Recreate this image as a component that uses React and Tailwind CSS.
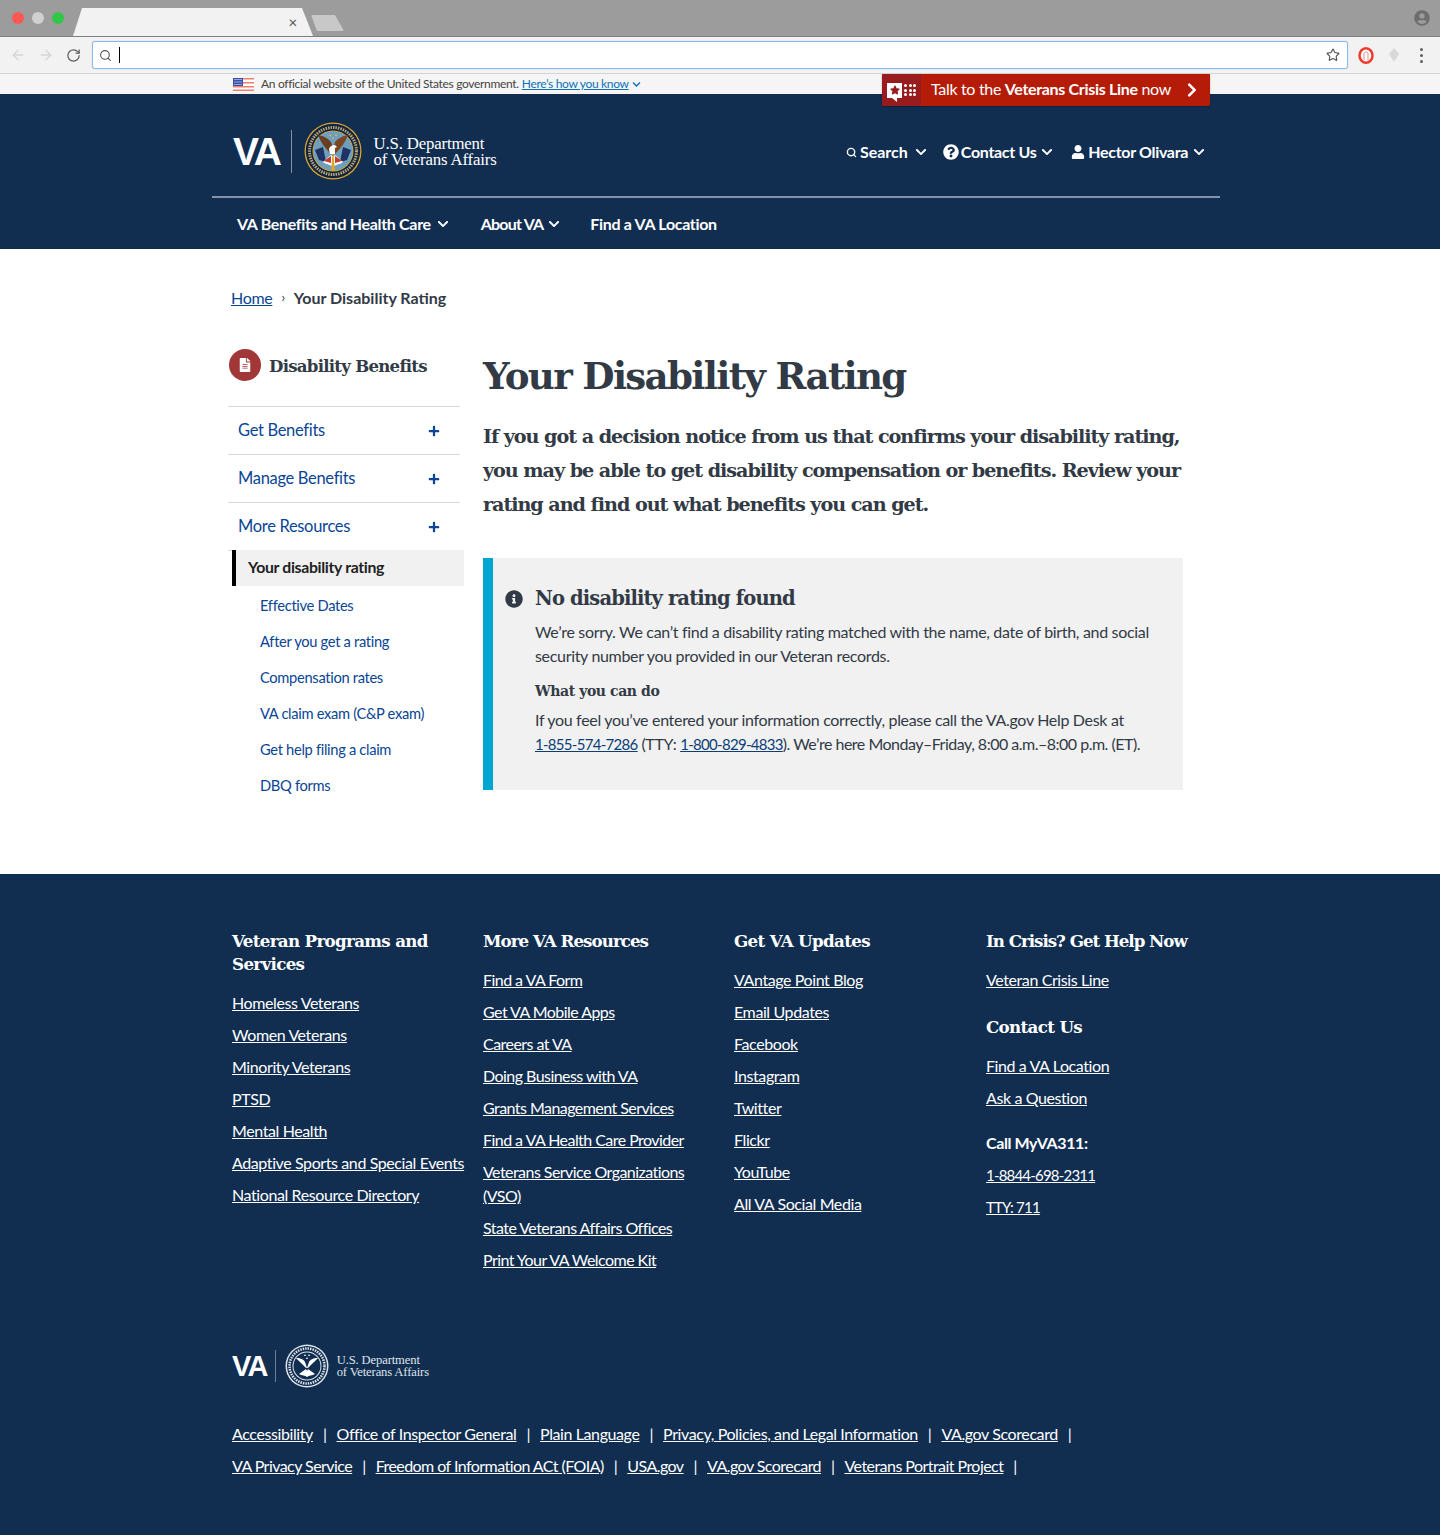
import { ArrowLeft, ArrowRight, RotateCw, Search, Star } from "lucide-react";
import {
  FaChevronDown,
  FaChevronRight,
  FaFileAlt,
  FaInfoCircle,
  FaPlus,
  FaQuestionCircle,
  FaStar,
  FaUser,
  FaUserCircle,
} from "react-icons/fa";

const sans = "font-['Lato','Noto_Sans',sans-serif]";
const slab = "font-['DejaVu_Serif',serif] font-bold";

const sideLinks = [
  "Effective Dates",
  "After you get a rating",
  "Compensation rates",
  "VA claim exam (C&P exam)",
  "Get help filing a claim",
  "DBQ forms",
];

const programs = [
  "Homeless Veterans",
  "Women Veterans",
  "Minority Veterans",
  "PTSD",
  "Mental Health",
  "Adaptive Sports and Special Events",
  "National Resource Directory",
];

const resources = [
  "Find a VA Form",
  "Get VA Mobile Apps",
  "Careers at VA",
  "Doing Business with VA",
  "Grants Management Services",
  "Find a VA Health Care Provider",
  "Veterans Service Organizations (VSO)",
  "State Veterans Affairs Offices",
  "Print Your VA Welcome Kit",
];

const updates = [
  "VAntage Point Blog",
  "Email Updates",
  "Facebook",
  "Instagram",
  "Twitter",
  "Flickr",
  "YouTube",
  "All VA Social Media",
];

const bottomOne = [
  "Accessibility",
  "Office of Inspector General",
  "Plain Language",
  "Privacy, Policies, and Legal Information",
  "VA.gov Scorecard",
];

const bottomTwo = [
  "VA Privacy Service",
  "Freedom of Information ACt (FOIA)",
  "USA.gov",
  "VA.gov Scorecard",
  "Veterans Portrait Project",
];

function Flag() {
  return (
    <svg width="21" height="13" viewBox="0 0 21 13">
      <rect width="21" height="13" fill="#fff" />
      {[0, 4, 8, 11.5].map((y) => (
        <rect key={y} y={y} width="21" height="1.500" fill="#ef7f6e" />
      ))}
      <rect width="10" height="8" fill="#3d4ea8" />
      <path d="M1.500 1.500h7M1.500 4h7M1.500 6.500h7" stroke="#fff" strokeDasharray="1 1" />
    </svg>
  );
}

function ColorSeal() {
  return (
    <svg width="58" height="58" viewBox="0 0 58 58">
      <circle cx="29" cy="29" r="28.500" fill="#d9a62e" />
      <circle cx="29" cy="29" r="27.200" fill="#12233f" />
      <circle cx="29" cy="29" r="23.500" fill="none" stroke="#b9a878" strokeWidth="3" strokeDasharray="1.500 1" />
      <circle cx="29" cy="29" r="20.500" fill="#d9a62e" />
      <circle cx="29" cy="29" r="19.700" fill="#6f9fbd" />
      <path d="M11 28l8-3 3 15-7-2z" fill="#1f3263" />
      <path d="M47 28l-8-3-3 15 7-2z" fill="#1f3263" />
      <path d="M27 32C22 27 17 21 14 13c6 1 9 3 13 7 1 3 2 8 2 12z" fill="#6b3d1f" />
      <path d="M31 32c5-5 10-11 13-19-6 1-9 3-13 7-1 3-2 8-2 12z" fill="#7a4722" />
      <path d="M25 27c1-3 3-4 6-4l2 2-2 1v6h-5z" fill="#fff" />
      <path d="M19 40l8-7 2 2 2-2 8 7c-4 3-7 2-10 5-3-3-6-2-10-5z" fill="#fff" />
      <path d="M20 39l7-5v7zM38 39l-7-5v7z" fill="#c8382f" />
      <path d="M28.500 32l-1.500 17h4l-1.500-17z" fill="#d9a62e" />
      <path d="M26 12l1 2h-2zM32 12l1 2h-2zM29 15l1 2h-2z" fill="#e2c14e" />
    </svg>
  );
}

function WhiteSeal() {
  return (
    <svg width="44" height="44" viewBox="0 0 44 44">
      <circle cx="22" cy="22" r="21.500" fill="#dfe4ea" />
      <circle cx="22" cy="22" r="20" fill="#112e51" />
      <circle cx="22" cy="22" r="17.500" fill="none" stroke="#dfe4ea" strokeWidth="2.500" strokeDasharray="1.500 1" />
      <circle cx="22" cy="22" r="14.500" fill="#dfe4ea" />
      <circle cx="22" cy="22" r="13.500" fill="#112e51" />
      <path d="M21 24C18 21 14 17 11 14c5 0 8 2 9 4l2 6zM23 24c3-3 7-7 10-10-5 0-8 2-9 4l-2 6z" fill="#fff" />
      <path d="M14 30l7-5 1 2 1-2 7 5c-3 2-6 1-8 3-2-2-5-1-8-3z" fill="#fff" />
      <path d="M20 10l1 2h-2zM24 10l1 2h-2zM22 13l1 2h-2z" fill="#fff" />
    </svg>
  );
}

function BrowserChrome() {
  return (
    <div className="bg-[#f2f2f2]">
      <div className="flex h-[37px] items-end border-b border-[#7f7f7f] bg-[#9c9c9c] pl-3">
        <div className="flex h-[36px] items-center gap-2 self-start">
          <span className="h-3 w-3 rounded-full bg-[#fc5753]" />
          <span className="h-3 w-3 rounded-full bg-[#d0d0d0]" />
          <span className="h-3 w-3 rounded-full bg-[#33c748]" />
        </div>
        <div className="ml-[9px] flex h-[28px] w-[240px] items-center justify-end bg-[#f2f2f2] pr-[16px] text-[15px] leading-none text-[#555] [clip-path:polygon(9px_0,229px_0,240px_100%,0_100%)]">
          ×
        </div>
        <div className="mb-[5px] ml-[-2px] h-[16px] w-[33px] rounded-[2px] bg-[#c8c8c8] [clip-path:polygon(0_0,24px_0,33px_100%,6px_100%)]" />
        <FaUserCircle className="mb-[10px] ml-auto mr-[10px] text-[16px] text-[#6e6e6e]" />
      </div>
      <div className="flex h-[37px] items-center border-b border-[#d4d4d4] pl-[10px] pr-[14px]">
        <ArrowLeft size={16} className="text-[#d5d5d5]" />
        <ArrowRight size={16} className="ml-3 text-[#d5d5d5]" />
        <RotateCw size={15} className="ml-3 text-[#5f5f5f]" />
        <div className="ml-[11px] flex h-[28px] w-[1256px] items-center rounded-[3px] border border-[#8cb9ec] bg-white pl-[6px] pr-[7px] shadow-[0_0_1px_#8cb9ec]">
          <Search size={13} className="text-[#555]" />
          <span className="ml-[7px] h-[16px] w-px bg-black" />
          <Star size={14} className="ml-auto text-[#555]" />
        </div>
        <svg width="16" height="17" viewBox="0 0 16 17" className="ml-[10px]">
          <ellipse cx="8" cy="8.500" rx="6.500" ry="7.200" fill="#fff" stroke="#ef3b2d" strokeWidth="2.500" />
          <path d="M6 13V6.500c0-2 4-2 4 0V13" fill="none" stroke="#f08a7e" strokeWidth="1" />
        </svg>
        <svg width="12" height="14" viewBox="0 0 12 14" className="ml-[14px]">
          <path d="M6 0l5 6-5 8-5-8z" fill="#d8d8d8" />
        </svg>
        <div className="ml-[20px] flex flex-col gap-[3px]">
          <span className="h-[3px] w-[3px] rounded-full bg-[#5f5f5f]" />
          <span className="h-[3px] w-[3px] rounded-full bg-[#5f5f5f]" />
          <span className="h-[3px] w-[3px] rounded-full bg-[#5f5f5f]" />
        </div>
      </div>
    </div>
  );
}

function CrisisButton() {
  return (
    <div className="absolute left-[670px] top-0 z-10 flex h-[32px] w-[328px] items-stretch rounded-b-[2px] bg-[#b51c08] text-white shadow-[0_1px_2px_rgba(0,0,0,0.3)]">
      <div className="flex w-[39px] items-center justify-center gap-[2px] rounded-bl-[2px] bg-[#981b1e]">
        <span className="relative flex h-[15px] w-[15px] items-center justify-center bg-white">
          <FaStar className="text-[10px] text-[#981b1e]" />
          <span className="absolute -bottom-[4px] left-[5px] h-0 w-0 border-l-[5px] border-t-[4px] border-l-transparent border-t-white" />
        </span>
        <span className="grid grid-cols-3 gap-[1.500px]">
          {[...Array(9).keys()].map((i) => (
            <span key={i} className="h-[3px] w-[3px] rounded-full bg-white" />
          ))}
        </span>
      </div>
      <div className="flex flex-1 items-center pb-[2px] pl-[10px] pr-[10px] text-[16px]">
        <span>
          Talk to the <b className="font-bold">Veterans Crisis Line</b> now
        </span>
        <FaChevronRight className="ml-auto mt-[2px] text-[16px]" />
      </div>
    </div>
  );
}

function Header() {
  return (
    <header className="bg-[#112e51] text-white">
      <div className="ml-[212px] w-[1008px]">
        <div className="flex h-[104px] items-center border-b-2 border-[#8592a6] pl-[21px] pr-[15px] pt-[14px]">
          <span className="-mt-[2px] flex items-center">
            <span className="font-['Liberation_Sans',sans-serif] text-[39px] font-bold leading-none tracking-[-0.06em]">VA</span>
            <span className="ml-[11px] h-[43px] w-px bg-[#8592a6]" />
            <span className="ml-[12px] flex"><ColorSeal /></span>
            <span className="ml-[12px] mt-[2px] font-['Liberation_Serif',serif] text-[16.800px] leading-[16px] tracking-[-0.01em]">
              U.S. Department
              <br />
              of Veterans Affairs
            </span>
          </span>
          <nav className="ml-auto flex items-center text-[16px] font-bold">
            <Search size={11} strokeWidth={3} className="mr-[3px]" />
            <span className="tracking-normal">Search</span>
            <FaChevronDown className="ml-[7px] text-[12px]" />
            <FaQuestionCircle className="ml-[16px] mr-[2px] text-[16px]" />
            <span>Contact Us</span>
            <FaChevronDown className="ml-[5px] text-[12px]" />
            <FaUser className="ml-[18px] mr-[3px] text-[14px]" />
            <span>Hector Olivara</span>
            <FaChevronDown className="ml-[5px] text-[12px]" />
          </nav>
        </div>
        <nav className="flex h-[51px] items-center pl-[25px] text-[16px] font-bold">
          <span>VA Benefits and Health Care</span>
          <FaChevronDown className="ml-[6px] text-[12px]" />
          <span className="ml-[32px] tracking-[-0.8px]">About VA</span>
          <FaChevronDown className="ml-[5px] text-[12px]" />
          <span className="ml-[30px]">Find a VA Location</span>
        </nav>
      </div>
    </header>
  );
}

function Sidebar() {
  return (
    <aside className="w-[236px]">
      <div className="flex h-[58px] w-[232px] items-start gap-2 border-b border-[#d6d7d9] pl-px">
        <span className="flex h-[32px] w-[32px] items-center justify-center rounded-full bg-[#a23737] text-white">
          <FaFileAlt className="text-[14px]" />
        </span>
        <span className={`${slab} mt-[5px] text-[16.600px] leading-[24px] tracking-[-0.045em] text-[#323a45]`}>Disability Benefits</span>
      </div>
      {["Get Benefits", "Manage Benefits", "More Resources"].map((t) => (
        <div key={t} className="flex h-[48px] w-[232px] items-center justify-between border-b border-[#d6d7d9] pl-[10px] pr-[20px] text-[16.500px] text-[#0a4595]">
          {t}
          <FaPlus className="text-[12px]" />
        </div>
      ))}
      <div className="-mt-px ml-1 flex h-[36px] w-[232px] items-center border-l-4 border-black bg-[#f1f1f1] pb-[2px] pl-3 text-[15.800px] font-bold text-[#212121]">
        Your disability rating
      </div>
      <div className="mt-px">
        {sideLinks.map((t) => (
          <div key={t} className="flex h-[36px] items-center pl-[32px] text-[14.700px] text-[#0a4595]">
            {t}
          </div>
        ))}
      </div>
    </aside>
  );
}

function Alert() {
  return (
    <div className="mt-[36px] h-[232px] border-l-[10px] border-[#00a6d2] bg-[#f1f1f1] pl-[12px] pt-[27px] text-[16px] leading-[24px] text-[#323a45]">
      <div className="flex items-center">
        <FaInfoCircle className="text-[18px]" />
        <h2 className={`${slab} ml-[12px] text-[19.500px] leading-[28px] tracking-[-0.045em]`}>No disability rating found</h2>
      </div>
      <div className="ml-[30px]">
        <p className="mt-[7px]">
          We’re sorry. We can’t find a disability rating matched with the name, date of birth, and social
          <br />
          security number you provided in our Veteran records.
        </p>
        <p className={`${slab} mt-[11px] text-[14px] tracking-[-0.03em]`}>What you can do</p>
        <p className="mt-[5px]">
          If you feel you’ve entered your information correctly, please call the VA.gov Help Desk at
          <br />
          <a className="text-[15px] tracking-[-0.7px] text-[#0b3d77] underline">1-855-574-7286</a> (TTY: <a className="text-[15px] tracking-[-0.7px] text-[#0b3d77] underline">1-800-829-4833</a><span className="tracking-[-0.5px]">). We’re here Monday–Friday, 8:00 a.m.–8:00 p.m. (ET).</span>
        </p>
      </div>
    </div>
  );
}

function FootHead({ children, className = "" }) {
  return <h3 className={`${slab} text-[16.700px] leading-[23px] tracking-[-0.04em] ${className}`}>{children}</h3>;
}

function FootLinks({ items }) {
  return (
    <ul className="mt-[15px] flex flex-col gap-2 text-[16px] leading-[24px]">
      {items.map((t, i) => (
        <li key={t + i}>
          <a className="underline">{t}</a>
        </li>
      ))}
    </ul>
  );
}

function BottomRow({ items, className = "" }) {
  return (
    <div className={`flex h-[32px] items-center text-[16px] ${className}`}>
      {items.map((t, i) => (
        <span key={t + i} className="flex items-center">
          <a className="underline">{t}</a>
          <span className="mx-[10px]">|</span>
        </span>
      ))}
    </div>
  );
}

function Footer() {
  return (
    <footer className="h-[661px] bg-[#112e51] pt-[56px] tracking-[-0.4px] text-white">
      <div className="mx-auto w-[976px]">
        <div className="grid h-[414px] grid-cols-[251px_251px_252px_1fr] items-start">
          <div>
            <FootHead>
              Veteran Programs and
              <br />
              Services
            </FootHead>
            <FootLinks items={programs} />
          </div>
          <div className="pr-[21px] tracking-[-0.55px]">
            <FootHead><span className="tracking-[-0.96px]">More VA Resources</span></FootHead>
            <FootLinks items={resources} />
          </div>
          <div>
            <FootHead>Get VA Updates</FootHead>
            <FootLinks items={updates} />
          </div>
          <div>
            <FootHead><span className="tracking-[-1.02px]">In Crisis? Get Help Now</span></FootHead>
            <FootLinks items={["Veteran Crisis Line"]} />
            <FootHead className="mt-[24px]">Contact Us</FootHead>
            <FootLinks items={["Find a VA Location", "Ask a Question"]} />
            <p className="mt-[21px] text-[16px] font-bold leading-[24px]">Call MyVA311:</p>
            <ul className="mt-2 flex flex-col gap-2 text-[15px] leading-[24px] tracking-[-0.8px]">
              <li><a className="underline">1-8844-698-2311</a></li>
              <li><a className="underline">TTY: 711</a></li>
            </ul>
          </div>
        </div>
        <div className="flex h-[44px] items-center">
          <span className="font-['Liberation_Sans',sans-serif] text-[29px] font-bold leading-none tracking-[-0.06em]">VA</span>
          <span className="ml-[8px] h-[32px] w-px bg-[#6f7f95]" />
          <span className="ml-[9px] flex"><WhiteSeal /></span>
          <span className="ml-[8px] font-['Liberation_Serif',serif] text-[12.600px] leading-[12px] tracking-[-0.01em] text-[#dfe4ea]">
            U.S. Department
            <br />
            of Veterans Affairs
          </span>
        </div>
        <div className="mt-[30px]">
          <BottomRow items={bottomOne} />
          <BottomRow items={bottomTwo} className="tracking-[-0.55px]" />
        </div>
      </div>
    </footer>
  );
}

export default function App() {
  return (
    <div className={`${sans} min-h-[1535px] bg-white text-[16px] tracking-[-0.32px]`}>
      <BrowserChrome />
      <div className="bg-[#f5f5f5]">
        <div className="relative ml-[212px] h-[20px] w-[1008px]">
          <div className="flex h-[20px] items-center pl-[21px] text-[12px] text-[#444]">
            <Flag />
            <span className="ml-[7px]">An official website of the United States government.</span>
            <a className="ml-[3px] text-[#0b72b7] underline">Here’s how you know</a>
            <FaChevronDown className="ml-[3px] text-[9px] text-[#0b72b7]" />
          </div>
          <CrisisButton />
        </div>
      </div>
      <Header />
      <main className="mx-auto h-[625px] w-[976px]">
        <div className="flex h-[100px] items-center pb-[2px] text-[16px] text-[#323a45]">
          <a className="-ml-px text-[#0a4595] underline">Home</a>
          <span className="mx-[9px] text-[13px]">›</span>
          <b className="font-bold tracking-normal">Your Disability Rating</b>
        </div>
        <div className="-ml-1 flex">
          <Sidebar />
          <div className="ml-[19px] w-[700px]">
            <h1 className={`${slab} text-[37.200px] leading-[54px] tracking-[-0.045em] text-[#323a45]`}>Your Disability Rating</h1>
            <p className={`${slab} mt-[17px] whitespace-nowrap text-[19.200px] leading-[34px] tracking-[-0.055em] text-[#323a45]`}>
              If you got a decision notice from us that confirms your disability rating,
              <br />
              you may be able to get disability compensation or benefits. Review your
              <br />
              rating and find out what benefits you can get.
            </p>
            <Alert />
          </div>
        </div>
      </main>
      <Footer />
    </div>
  );
}
